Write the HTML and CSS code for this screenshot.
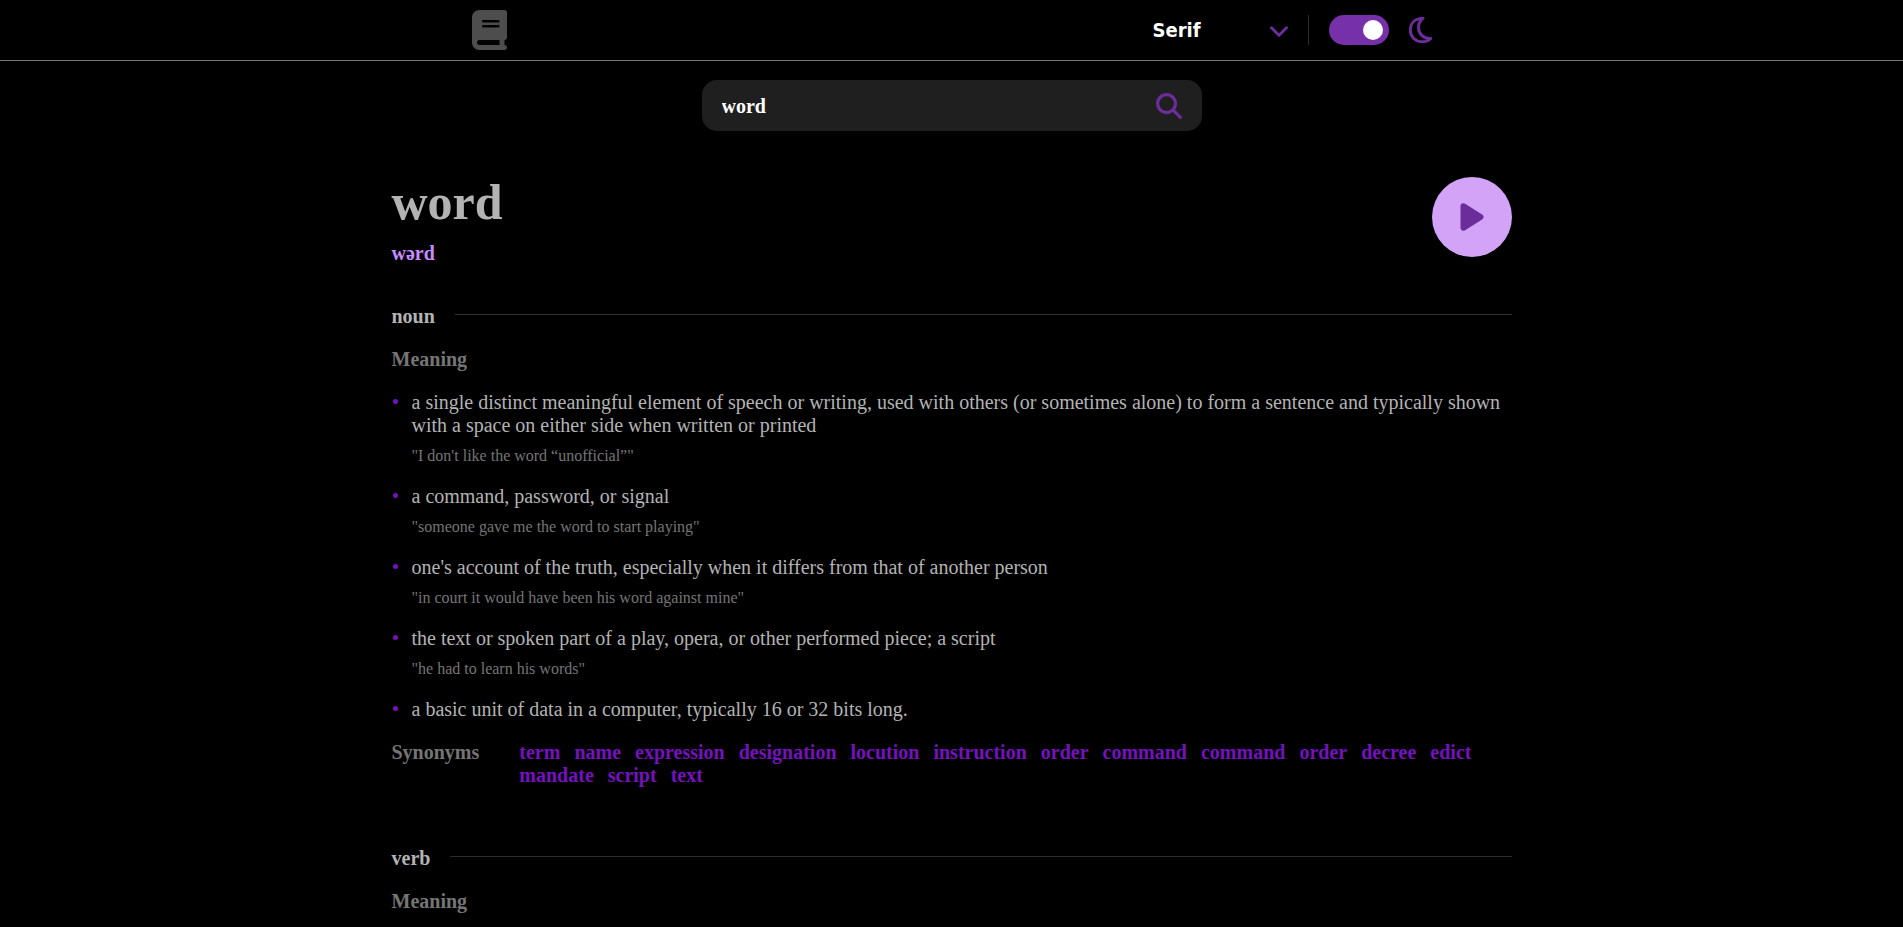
FILE: index.html
```html
<!DOCTYPE html>
<html lang="en">
<head>
<meta charset="utf-8">
<title>Dictionary</title>
<link rel="stylesheet" href="styles.css">
</head>
<body>
<header class="header">
  <div class="header-inner">
    <svg class="logo" viewBox="0 0 448 512" aria-hidden="true"><path d="M96 0C43 0 0 43 0 96V416c0 53 43 96 96 96H384h32c17.7 0 32-14.3 32-32s-14.3-32-32-32V384c17.7 0 32-14.3 32-32V32c0-17.7-14.3-32-32-32H384 96zm0 384H352v64H96c-17.7 0-32-14.3-32-32s14.3-32 32-32zm32-240c0-8.8 7.2-16 16-16H336c8.8 0 16 7.2 16 16s-7.2 16-16 16H144c-8.8 0-16-7.2-16-16zm16 48H336c8.8 0 16 7.2 16 16s-7.2 16-16 16H144c-8.8 0-16-7.2-16-16s7.2-16 16-16z"/></svg>
    <div class="controls">
      <div class="font-picker">
        <select class="font-select" aria-label="Font">
          <option>Sans</option>
          <option selected>Serif</option>
          <option>Mono</option>
        </select>
        <svg class="chevron" viewBox="0 0 18 14" aria-hidden="true"><path d="M1.500 4.800L9 12.300L16.500 4.800"/></svg>
      </div>
      <span class="divider"></span>
      <input class="toggle" type="checkbox" role="switch" aria-label="Dark mode" checked>
      <svg class="moon" viewBox="0 0 23 26" aria-hidden="true"><path d="M14 1.300C5 1.500 1.300 7 1.300 13.300C1.300 20 6.500 24.700 13 24.700C17 24.700 19.800 23.500 21.700 21.400C14 22 9.500 16.500 9.500 10.500C9.500 6.500 11 3.500 14 1.300Z"/></svg>
    </div>
  </div>
</header>
<main class="page">
  <form class="search">
    <input class="search-input" type="text" value="word" aria-label="Search word">
    <button class="search-button" type="button" aria-label="Search"><svg class="search-icon" viewBox="0 0 512 512" aria-hidden="true"><path d="M416 208c0 45.900-14.900 88.300-40 122.700L502.600 457.400c12.500 12.500 12.500 32.800 0 45.300s-32.800 12.500-45.300 0L330.700 376c-34.400 25.200-76.800 40-122.700 40C93.100 416 0 322.900 0 208S93.100 0 208 0S416 93.100 416 208zM208 352a144 144 0 1 0 0-288 144 144 0 1 0 0 288z"/></svg></button>
  </form>
  <section class="entry">
    <div>
      <h1 class="headword">word</h1>
      <p class="phonetic">wərd</p>
    </div>
    <button class="play" type="button" aria-label="Play pronunciation"><svg class="play-icon" viewBox="0 0 24 28" aria-hidden="true"><path d="M3.500 3.300L20.500 14L3.500 24.700Z"/></svg></button>
  </section>
  <section class="part">
    <div class="part-head"><h2 class="part-name">noun</h2><hr class="rule"></div>
    <h3 class="label">Meaning</h3>
    <ul class="meanings">
      <li class="meaning">a single distinct meaningful element of speech or writing, used with others (or sometimes alone) to form a sentence and typically shown with a space on either side when written or printed<p class="example">"I don't like the word “unofficial”"</p></li>
      <li class="meaning">a command, password, or signal<p class="example">"someone gave me the word to start playing"</p></li>
      <li class="meaning">one's account of the truth, especially when it differs from that of another person<p class="example">"in court it would have been his word against mine"</p></li>
      <li class="meaning">the text or spoken part of a play, opera, or other performed piece; a script<p class="example">"he had to learn his words"</p></li>
      <li class="meaning">a basic unit of data in a computer, typically 16 or 32 bits long.</li>
    </ul>
    <div class="synonyms">
      <h3 class="label">Synonyms</h3>
      <div class="synonym-list">
        <a class="synonym" href="#">term</a><a class="synonym" href="#">name</a><a class="synonym" href="#">expression</a><a class="synonym" href="#">designation</a><a class="synonym" href="#">locution</a><a class="synonym" href="#">instruction</a><a class="synonym" href="#">order</a><a class="synonym" href="#">command</a><a class="synonym" href="#">command</a><a class="synonym" href="#">order</a><a class="synonym" href="#">decree</a><a class="synonym" href="#">edict</a><a class="synonym" href="#">mandate</a><a class="synonym" href="#">script</a><a class="synonym" href="#">text</a>
      </div>
    </div>
  </section>
  <section class="part">
    <div class="part-head"><h2 class="part-name">verb</h2><hr class="rule"></div>
    <h3 class="label">Meaning</h3>
  </section>
</main>
</body>
</html>
```
FILE: styles.css
```css
* {
  box-sizing: border-box;
  margin: 0;
  padding: 0;
}

body {
  background: #000;
  color: #b3b3b3;
  font: 20px/23px "Liberation Serif", "Times New Roman", serif;
}

button {
  border: 0;
  background: none;
  cursor: pointer;
}

/* Header */
.header {
  border-bottom: 1px solid #757575;
}

.header-inner {
  display: flex;
  justify-content: space-between;
  align-items: center;
  max-width: 960px;
  margin: 0 auto;
  padding: 10px 0;
}

.logo {
  width: 35px;
  height: 40px;
  fill: #4d4d4d;
}

.controls {
  display: flex;
  align-items: center;
  gap: 20px;
}

.font-picker {
  display: grid;
  grid-template-columns: 117px 18px;
  align-items: center;
}

.font-select {
  grid-area: 1 / 1 / 2 / 3;
  appearance: none;
  border: 0;
  outline: 0;
  background: transparent;
  color: #fff;
  font: bold 20px/30px Tahoma, "DejaVu Sans Condensed", "Noto Sans", sans-serif;
}

.chevron {
  grid-area: 1 / 2;
  width: 18px;
  height: 14px;
  fill: none;
  stroke: #6b2d99;
  stroke-width: 3;
  stroke-linecap: round;
  stroke-linejoin: round;
  pointer-events: none;
}

.divider {
  width: 1px;
  height: 30px;
  background: #2d2d2d;
}

.toggle {
  appearance: none;
  display: flex;
  justify-content: flex-end;
  width: 60px;
  height: 30px;
  padding: 5px 6px;
  border-radius: 15px;
  background: #7530aa;
}

.toggle::before {
  content: "";
  width: 20px;
  height: 20px;
  border-radius: 50%;
  background: #fff;
}

.moon {
  width: 23px;
  height: 26px;
  fill: none;
  stroke: #6b2d99;
  stroke-width: 3;
  stroke-linejoin: round;
}

/* Search */
.page {
  max-width: 1120px;
  margin: 0 auto;
}

.search {
  display: flex;
  align-items: center;
  max-width: 500px;
  margin: 19px auto 38px;
  padding: 0 20px;
  border-radius: 15px;
  background: #1f1f1f;
}

.search-input {
  flex: 1;
  min-width: 0;
  padding: 15px 0 13px;
  border: 0;
  outline: 0;
  background: none;
  color: #fff;
  font: bold 20px/23px "Liberation Serif", "Times New Roman", serif;
}

.search-icon {
  display: block;
  width: 26px;
  height: 26px;
  fill: #6b2d99;
}

/* Entry */
.entry {
  display: flex;
  justify-content: space-between;
  align-items: center;
}

.headword {
  margin-bottom: 7px;
  font-size: 50px;
  line-height: 66px;
}

.phonetic {
  color: #c78bff;
  font-weight: bold;
}

.play {
  display: grid;
  place-items: center;
  width: 80px;
  height: 80px;
  border-radius: 50%;
  background: #d2a3f7;
}

.play-icon {
  width: 24px;
  height: 28px;
  fill: #6b2d99;
  stroke: #6b2d99;
  stroke-width: 6;
  stroke-linejoin: round;
}

/* Parts of speech */
.part {
  margin: 40px 0 60px;
}

.part + .part {
  margin-top: 60px;
}

.part-head {
  display: flex;
  align-items: center;
  gap: 20px;
  margin-bottom: 20px;
}

.part-name {
  font-size: 20px;
}

.rule {
  flex: 1;
  margin-bottom: 4px;
  border: 0;
  border-top: 1px solid #2d2d2d;
}

.label {
  color: #757575;
  font-size: 20px;
}

.meanings {
  display: flex;
  flex-direction: column;
  gap: 20px;
  margin: 20px 0;
  padding-left: 20px;
  list-style: none;
}

.meaning::before {
  content: "";
  float: left;
  width: 5px;
  height: 5px;
  margin: 8px 0 0 -19px;
  border-radius: 50%;
  background: #7511bf;
}

.example {
  padding-top: 10px;
  color: #757575;
  font-size: 16px;
  line-height: 18px;
}

.synonyms {
  display: flex;
  align-items: flex-start;
  gap: 40px;
}

.synonym-list {
  display: flex;
  flex: 1;
  flex-wrap: wrap;
  column-gap: 14px;
}

.synonym {
  color: #7511bf;
  font-weight: bold;
  text-decoration: none;
}
```
